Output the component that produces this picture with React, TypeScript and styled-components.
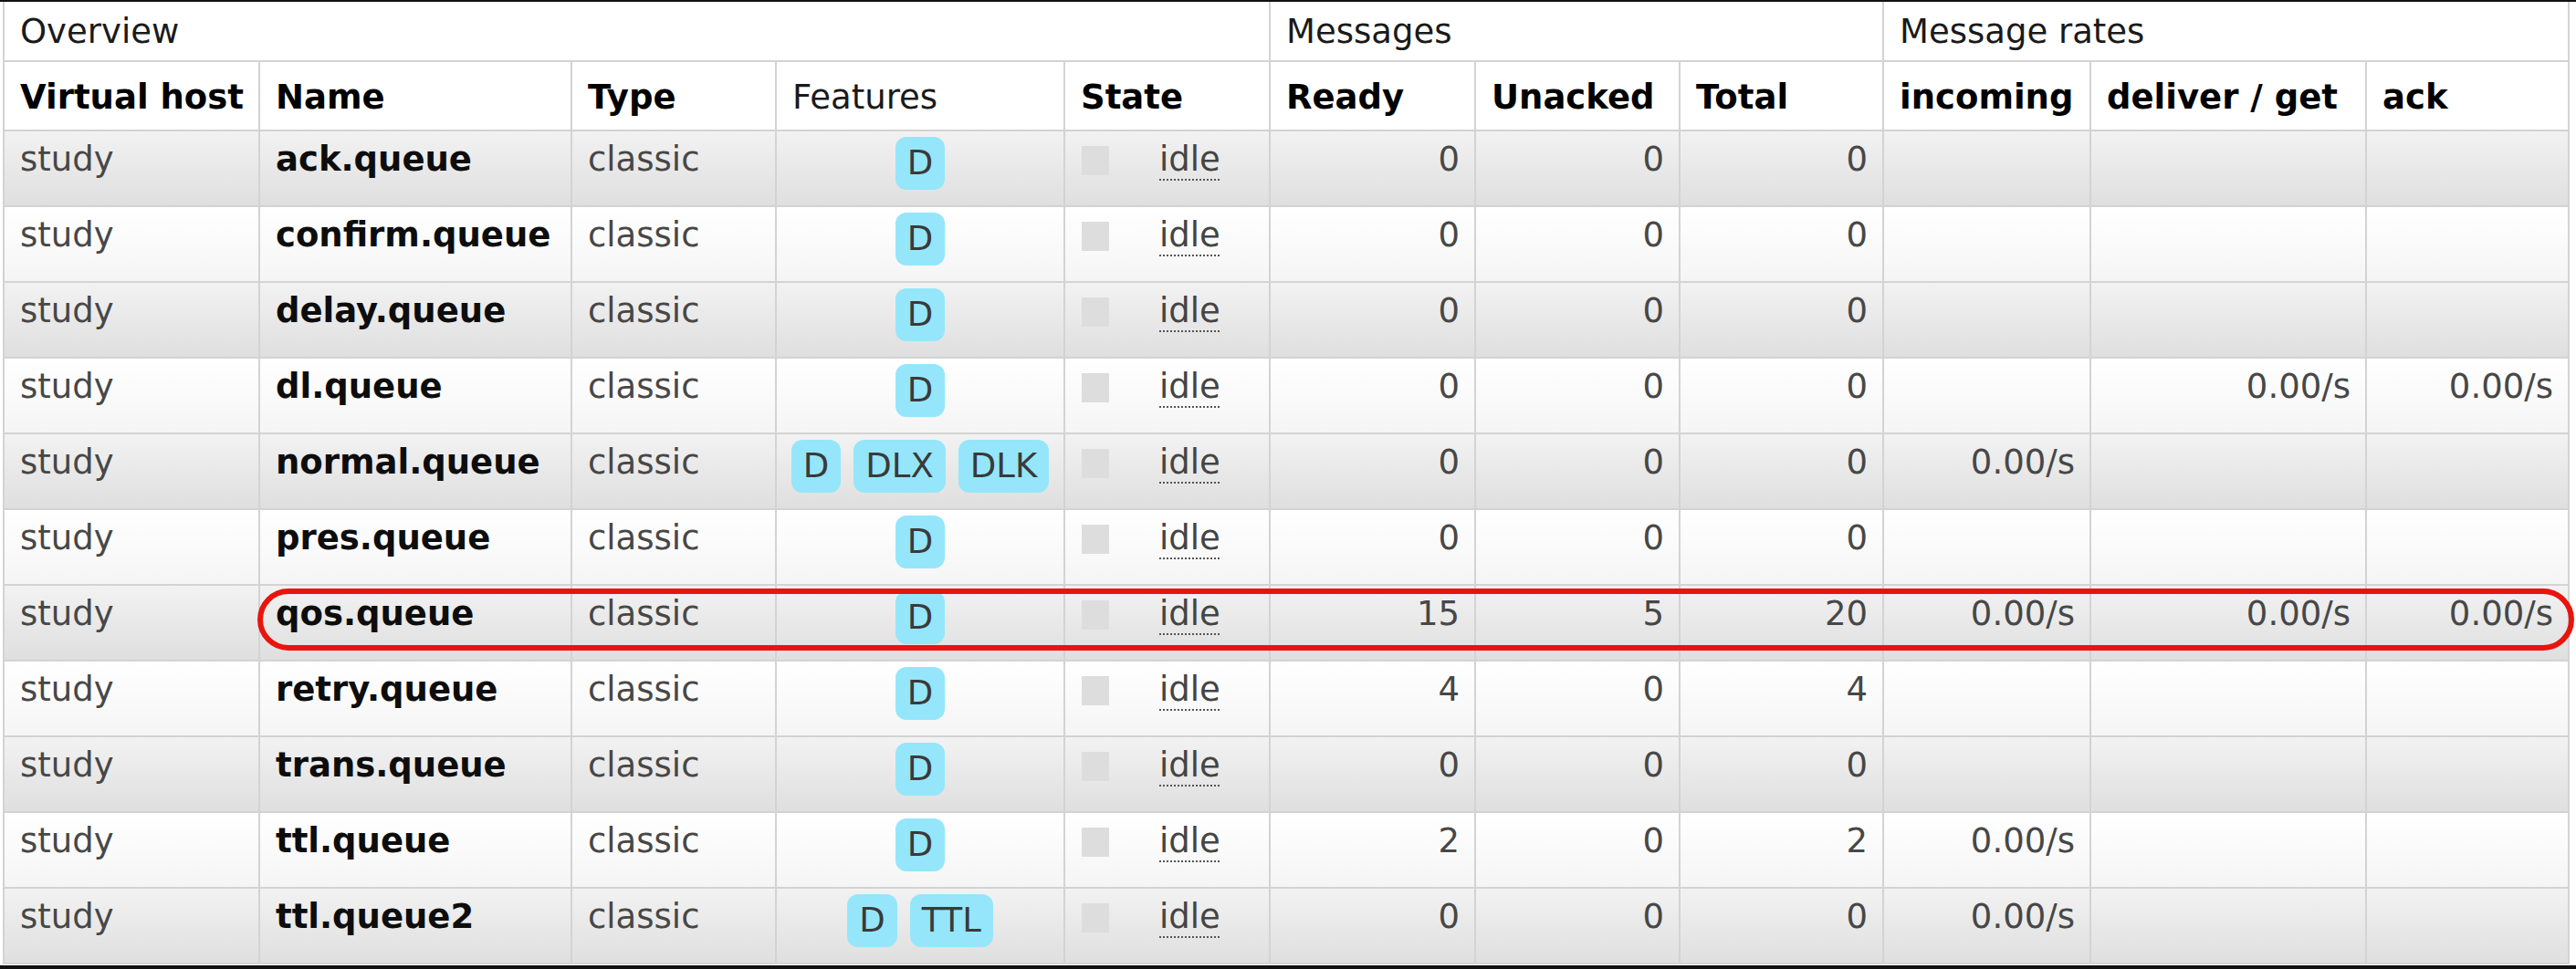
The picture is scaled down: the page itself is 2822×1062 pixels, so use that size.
import React from 'react';
import styled, { createGlobalStyle } from 'styled-components';

/* --------------------------------- styles --------------------------------- */

const COLS = '280px 342px 224px 316px 225px 225px 224px 223px 227px 302px 222px';
const LINE = '#d3d3d3';

const GlobalStyle = createGlobalStyle`
  html, body {
    margin: 0;
    padding: 0;
    background: #fff;
    overflow: hidden;
  }
`;

const Page = styled.div`
  width: 2822px;
  height: 1062px;
  box-sizing: border-box;
  border-top: 2px solid #111;
  display: flex;
  flex-direction: column;
  background: #fff;
  font-family: 'DejaVu Sans', Verdana, sans-serif;
  font-size: 37px;
  color: #222;
`;

const Table = styled.div`
  margin-left: 3px;
  width: 2812px;
  border-left: 2px solid ${LINE};
`;

const Footer = styled.div`
  flex: 1;
  margin-top: 1px;
  background: #111;
`;

const BaseCell = styled.div`
  box-sizing: border-box;
  border-right: 2px solid ${LINE};
  border-bottom: 2px solid ${LINE};
  line-height: 43px;
  white-space: nowrap;
  overflow: visible;
`;

type Tone = 'head' | 'alt' | 'plain';

const Row = styled.div<{ $h: number; $tone: Tone }>`
  display: grid;
  grid-template-columns: ${COLS};
  height: ${(p) => p.$h}px;
  position: relative;

  & > ${BaseCell} {
    background: ${(p) =>
      p.$tone === 'alt'
        ? 'linear-gradient(#f2f2f2, #dfdfdf)'
        : p.$tone === 'plain'
          ? 'linear-gradient(#ffffff, #f5f5f5)'
          : '#fff'};
  }
`;

const GroupCell = styled(BaseCell)<{ $span: number }>`
  grid-column: span ${(p) => p.$span};
  display: flex;
  align-items: center;
  padding: 0 17px;
  color: #1a1a1a;
`;

const HeadCell = styled(BaseCell)<{ $bold?: boolean }>`
  padding: 17px 16px 0 17px;
  font-weight: ${(p) => (p.$bold ? 700 : 400)};
  color: ${(p) => (p.$bold ? '#000' : '#1a1a1a')};
`;

type Kind = 'muted' | 'name' | 'num';

const Cell = styled(BaseCell)<{ $kind?: Kind }>`
  padding: 9px 16px 0 17px;
  text-align: ${(p) => (p.$kind === 'num' ? 'right' : 'left')};
  font-weight: ${(p) => (p.$kind === 'name' ? 700 : 400)};
  color: ${(p) => (p.$kind === 'name' ? '#0d0d0d' : '#474747')};
`;

const FeatureCell = styled(BaseCell)`
  padding: 6px 4px 0;
  display: flex;
  justify-content: center;
  align-items: flex-start;
  gap: 14px;
`;

const Badge = styled.span`
  display: inline-block;
  padding: 9px 13px;
  line-height: 40px;
  border-radius: 12px;
  background: #95e6fa;
  color: #3a3a3a;
`;

const StateCell = styled(BaseCell)`
  padding: 9px 16px 0 18px;
  display: flex;
  align-items: flex-start;
`;

const StateBox = styled.span`
  width: 30px;
  height: 32px;
  margin-top: 7px;
  background: #dddddd;
  flex: none;
`;

const Idle = styled.abbr`
  margin-left: 55px;
  color: #444;
  text-decoration: underline dotted #555;
  text-decoration-thickness: 2px;
  text-underline-offset: 9px;
`;

const Highlight = styled.div`
  position: absolute;
  left: 277px;
  top: 3px;
  width: 2538px;
  height: 68px;
  box-sizing: border-box;
  border: 6px solid #e8150d;
  border-radius: 34px;
  background: transparent;
  pointer-events: none;
`;

/* ---------------------------------- data ---------------------------------- */

type Queue = {
  name: string;
  features: string[];
  ready: number;
  unacked: number;
  total: number;
  rates: [string, string, string];
  marked?: boolean;
};

const R = '0.00/s';

const queues: Queue[] = [
  { name: 'ack.queue', features: ['D'], ready: 0, unacked: 0, total: 0, rates: ['', '', ''] },
  { name: 'confirm.queue', features: ['D'], ready: 0, unacked: 0, total: 0, rates: ['', '', ''] },
  { name: 'delay.queue', features: ['D'], ready: 0, unacked: 0, total: 0, rates: ['', '', ''] },
  { name: 'dl.queue', features: ['D'], ready: 0, unacked: 0, total: 0, rates: ['', R, R] },
  {
    name: 'normal.queue',
    features: ['D', 'DLX', 'DLK'],
    ready: 0,
    unacked: 0,
    total: 0,
    rates: [R, '', ''],
  },
  { name: 'pres.queue', features: ['D'], ready: 0, unacked: 0, total: 0, rates: ['', '', ''] },
  {
    name: 'qos.queue',
    features: ['D'],
    ready: 15,
    unacked: 5,
    total: 20,
    rates: [R, R, R],
    marked: true,
  },
  { name: 'retry.queue', features: ['D'], ready: 4, unacked: 0, total: 4, rates: ['', '', ''] },
  { name: 'trans.queue', features: ['D'], ready: 0, unacked: 0, total: 0, rates: ['', '', ''] },
  { name: 'ttl.queue', features: ['D'], ready: 2, unacked: 0, total: 2, rates: [R, '', ''] },
  { name: 'ttl.queue2', features: ['D', 'TTL'], ready: 0, unacked: 0, total: 0, rates: [R, '', ''] },
];

const headers: { label: string; bold: boolean }[] = [
  { label: 'Virtual host', bold: true },
  { label: 'Name', bold: true },
  { label: 'Type', bold: true },
  { label: 'Features', bold: false },
  { label: 'State', bold: true },
  { label: 'Ready', bold: true },
  { label: 'Unacked', bold: true },
  { label: 'Total', bold: true },
  { label: 'incoming', bold: true },
  { label: 'deliver / get', bold: true },
  { label: 'ack', bold: true },
];

/* -------------------------------- component ------------------------------- */

const QueueRow = ({ q, index }: { q: Queue; index: number }) => (
  <Row $h={83} $tone={index % 2 === 0 ? 'alt' : 'plain'}>
    <Cell $kind="muted">study</Cell>
    <Cell $kind="name">{q.name}</Cell>
    <Cell $kind="muted">classic</Cell>
    <FeatureCell>
      {q.features.map((f) => (
        <Badge key={f}>{f}</Badge>
      ))}
    </FeatureCell>
    <StateCell>
      <StateBox />
      <Idle title="idle">idle</Idle>
    </StateCell>
    <Cell $kind="num">{q.ready}</Cell>
    <Cell $kind="num">{q.unacked}</Cell>
    <Cell $kind="num">{q.total}</Cell>
    {q.rates.map((r, i) => (
      <Cell key={i} $kind="num">
        {r}
      </Cell>
    ))}
    {q.marked && <Highlight />}
  </Row>
);

const App = () => (
  <Page>
    <GlobalStyle />
    <Table>
      <Row $h={66} $tone="head">
        <GroupCell $span={5}>Overview</GroupCell>
        <GroupCell $span={3}>Messages</GroupCell>
        <GroupCell $span={3}>Message rates</GroupCell>
      </Row>
      <Row $h={76} $tone="head">
        {headers.map((h) => (
          <HeadCell key={h.label} $bold={h.bold}>
            {h.label}
          </HeadCell>
        ))}
      </Row>
      {queues.map((q, i) => (
        <QueueRow key={q.name} q={q} index={i} />
      ))}
    </Table>
    <Footer />
  </Page>
);

export default App;
